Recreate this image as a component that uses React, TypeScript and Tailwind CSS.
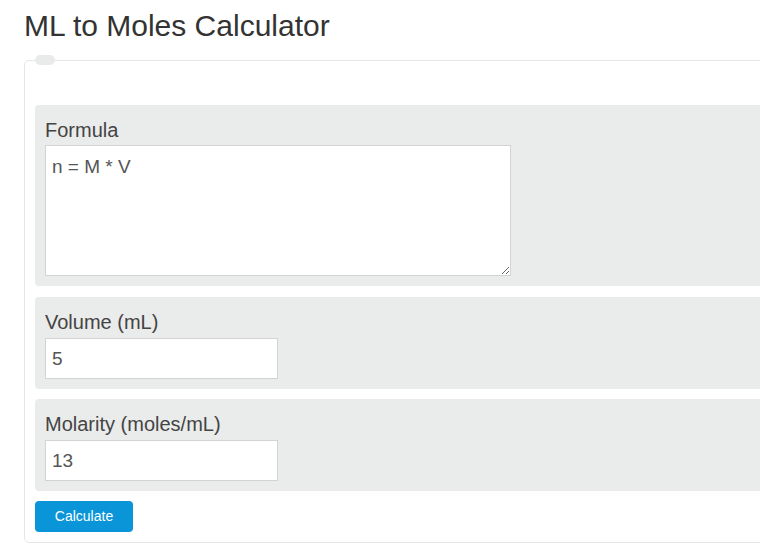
import { useState } from "react";

const font = { fontFamily: '"Liberation Sans", Arial, sans-serif' };

function Panel({ label, gap, children }: { label: string; gap: string; children: React.ReactNode }) {
  return (
    <div className="rounded-[4px] bg-[#eaebeb] px-[10px] pt-[13px] pb-[10px]">
      <label className={`block text-[20px] leading-[24px] text-[#444] ${gap}`}>{label}</label>
      {children}
    </div>
  );
}

export default function App() {
  const [volume, setVolume] = useState("5");
  const [molarity, setMolarity] = useState("13");

  return (
    <div className="h-[544px] w-[760px] overflow-hidden bg-white" style={font}>
      <h1 className="ml-[24px] mt-[9px] text-[30px] font-normal leading-[33px] text-[#333]">
        ML to Moles Calculator
      </h1>

      <div className="relative ml-[24px] mt-[18px] w-[800px] rounded-[5px] border border-[#e6e6e6] px-[10px] pt-[44px] pb-[10px]">
        {/* legend pill */}
        <span className="absolute left-[10px] top-[-6px] h-[10px] w-[20px] rounded-full bg-[#e9ebea]" />

        <div className="flex flex-col gap-[10px]">
          <div className="mb-[1px]">
            <Panel label="Formula" gap="mb-[3px]">
              <textarea
                readOnly
                defaultValue="n = M * V"
                className="block h-[131px] w-[466px] border border-[#d2d4d4] bg-white px-[6px] pt-[9px] text-[19px] leading-[24px] text-[#555] outline-none"
                style={font}
              />
            </Panel>
          </div>

          <Panel label="Volume (mL)" gap="mb-[4px]">
            <input
              value={volume}
              onChange={(e) => setVolume(e.target.value)}
              className="block h-[41px] w-[233px] border border-[#d2d4d4] bg-white px-[6px] text-[19px] text-[#555] outline-none"
              style={font}
            />
          </Panel>

          <Panel label="Molarity (moles/mL)" gap="mb-[4px]">
            <input
              value={molarity}
              onChange={(e) => setMolarity(e.target.value)}
              className="block h-[41px] w-[233px] border border-[#d2d4d4] bg-white px-[6px] text-[19px] text-[#555] outline-none"
              style={font}
            />
          </Panel>

          <div>
            <button className="h-[31px] w-[98px] rounded-[4px] bg-[#0a95d9] text-[14px] text-white">
              Calculate
            </button>
          </div>
        </div>
      </div>
    </div>
  );
}
